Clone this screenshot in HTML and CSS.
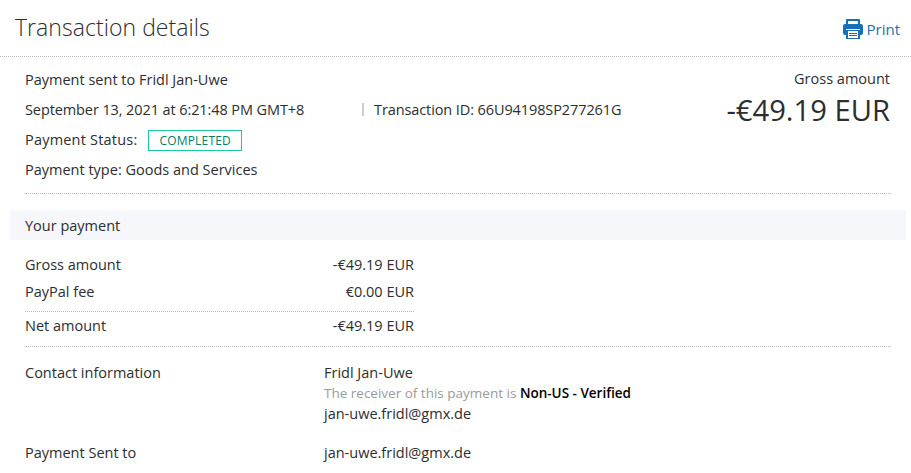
FILE: index.html
```html
<!DOCTYPE html>
<html lang="en">
<head>
    <meta charset="UTF-8">
    <title>Transaction details</title>
    <link rel="stylesheet" href="styles.css">
</head>
<body>
    <header class="page-head">
        <h1>Transaction details</h1>
        <a class="print" href="#">
            <svg width="20" height="20" viewBox="0 0 20 20">
                <path fill="#1570b8" d="M4 0h12a1 1 0 0 1 1 1v5h-2V2H5v4H3V1a1 1 0 0 1 1-1z"/>
                <path fill="#1570b8" d="M2 5h16a2 2 0 0 1 2 2v7a2 2 0 0 1-2 2h-1v-6H3v6H2a2 2 0 0 1-2-2V7a2 2 0 0 1 2-2z"/>
                <path fill="#1570b8" d="M3 11h14v9H3z"/>
                <path fill="#fff" d="M5 12h10v7H5z"/>
                <path fill="#1570b8" d="M6 14h8v1H6zM6 16h8v1H6z"/>
            </svg>
            Print
        </a>
    </header>
    <section class="summary">
        <div class="summary-left">
            <p>Payment sent to Fridl Jan-Uwe</p>
            <p><span class="date">September 13, 2021 at 6:21:48 PM GMT+8</span><span class="txn">Transaction ID: 66U94198SP277261G</span></p>
            <p><span class="status-label">Payment Status:</span><span class="badge">COMPLETED</span></p>
            <p>Payment type: Goods and Services</p>
        </div>
        <div class="summary-right">
            <div>Gross amount</div>
            <div class="big">-€49.19 EUR</div>
        </div>
    </section>
    <h2 class="band">Your payment</h2>
    <section class="amounts">
        <div class="amount-row"><span>Gross amount</span><span>-€49.19 EUR</span></div>
        <div class="amount-row"><span>PayPal fee</span><span>€0.00 EUR</span></div>
        <div class="amount-row net"><span>Net amount</span><span>-€49.19 EUR</span></div>
    </section>
    <section class="contact">
        <div>Contact information</div>
        <div>
            <div>Fridl Jan-Uwe</div>
            <div class="note">The receiver of this payment is <b>Non-US - Verified</b></div>
            <div>jan-uwe.fridl@gmx.de</div>
        </div>
        <div class="sent">Payment Sent to</div>
        <div class="sent">jan-uwe.fridl@gmx.de</div>
    </section>
</body>
</html>
```

FILE: styles.css
```css
body {
    font-family: "Open Sans", "Noto Sans", sans-serif;
    font-size: 14.5px;
    color: #2c2e2f;
    background: #fff;
    margin: 0;
    overflow: hidden;
}

.page-head {
    display: flex;
    justify-content: space-between;
    align-items: center;
    height: 56px;
    padding: 0 11px 0 15px;
    border-bottom: 1px dotted #bbb;
}

.page-head h1 {
    font-size: 23px;
    font-weight: 300;
    letter-spacing: 0.05px;
    margin: 0 0 3px;
}

.print {
    display: flex;
    align-items: center;
    gap: 4px;
    color: #1570b8;
    font-size: 15px;
    font-weight: 500;
    text-decoration: none;
    margin-top: 1px;
}

.summary {
    display: flex;
    justify-content: space-between;
    margin: 0 20px 0 25px;
    padding: 12px 0 4px;
    border-bottom: 1px dotted #bbb;
}

.summary p {
    margin: 0;
    height: 30px;
    line-height: 22px;
}

.date {
    display: inline-block;
    width: 337px;
    letter-spacing: -0.1px;
}

.txn {
    position: relative;
    padding-left: 12px;
    letter-spacing: -0.1px;
}

.txn::before {
    content: "";
    position: absolute;
    left: 0;
    top: 3px;
    width: 2px;
    height: 13px;
    background: #ccc;
}

.status-label {
    letter-spacing: 0.2px;
}

.badge {
    display: inline-block;
    border: 1px solid #1cc79a;
    color: #00806a;
    font-size: 12px;
    letter-spacing: 0.2px;
    line-height: 19px;
    padding: 0 10px;
    margin-left: 11px;
}

.summary-right {
    text-align: right;
    padding-right: 1px;
}

.big {
    font-size: 29.2px;
    margin-top: 2px;
}

.band {
    background: #f5f7fa;
    font-size: 14.5px;
    font-weight: 400;
    margin: 16px 5px 0 10px;
    padding: 6px 15px 4px;
    height: 20px;
}

.amounts {
    margin: 11px 20px 0 25px;
    padding-bottom: 7px;
    border-bottom: 1px dotted #bbb;
}

.amount-row {
    display: flex;
    justify-content: space-between;
    width: 389px;
    line-height: 27px;
}

.net {
    border-top: 1px dotted #bbb;
    margin-top: 6px;
}

.contact {
    display: grid;
    grid-template-columns: 299px 1fr;
    margin: 15px 20px 0 25px;
    line-height: 21px;
}

.note {
    color: #9a9a9a;
    font-size: 13.5px;
    font-weight: 500;
    line-height: 20px;
}

.note b {
    color: #000;
    font-weight: 600;
}

.sent {
    margin-top: 18px;
}
```
